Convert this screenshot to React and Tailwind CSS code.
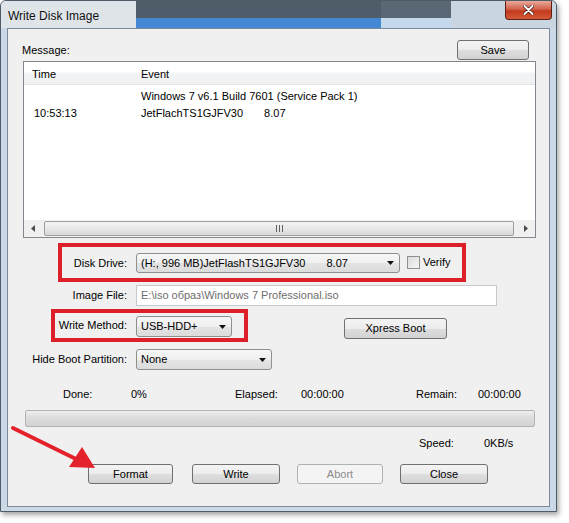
import React from "react";

const Arrow = ({ dir = "down" }) => {
  if (dir === "left")
    return (
      <svg width="4" height="7" viewBox="0 0 4 7">
        <path d="M4 0 L0 3.5 L4 7 Z" fill="#4d4d4d" />
      </svg>
    );
  if (dir === "right")
    return (
      <svg width="4" height="7" viewBox="0 0 4 7">
        <path d="M0 0 L4 3.5 L0 7 Z" fill="#4d4d4d" />
      </svg>
    );
  return (
    <svg width="7" height="4" viewBox="0 0 7 4">
      <path d="M0 0 H7 L3.5 4 Z" fill="#111" />
    </svg>
  );
};

function Combo({ className = "", children }) {
  return (
    <div
      className={`flex items-center rounded-[3px] border border-[#8e8f8f] bg-[linear-gradient(180deg,#f7f7f7_0%,#efefef_50%,#e4e4e4_51%,#dcdcdc_100%)] pl-[4px] ${className}`}
    >
      <div className="flex-1 whitespace-pre">{children}</div>
      <div className="mr-[5px] flex items-center">
        <Arrow />
      </div>
    </div>
  );
}

function Button({ className = "", disabled = false, children }) {
  return (
    <div
      className={`flex items-center justify-center rounded-[3px] border ${
        disabled
          ? "border-[#adb2b5] bg-[#f4f4f4] text-[#8c8c8c]"
          : "border-[#707070] bg-[linear-gradient(180deg,#f4f4f4_0%,#ececec_50%,#dedede_51%,#d2d2d2_100%)] text-black"
      } ${className}`}
    >
      {children}
    </div>
  );
}

function FieldRow({ label, className = "", children }) {
  return (
    <div className={`flex items-start ${className}`}>
      <div className="w-[120px] pr-[1px] text-right leading-[20px]">{label}</div>
      <div className="ml-[8px] flex items-start">{children}</div>
    </div>
  );
}

export default function App() {
  return (
    <div className="h-[523px] w-[569px] bg-white font-['Liberation_Sans',Arial,sans-serif] text-[11px] text-black">
      <div className="relative flex h-[512px] w-[557px] flex-col rounded-t-[6px] border border-[#4f5b66] bg-[#cbd9e7] shadow-[2px_3px_5px_rgba(0,0,0,0.35)]">
        {/* title bar: glass tint in three zones */}
        <div className="flex h-[27px] items-stretch overflow-hidden rounded-t-[5px]">
          <div className="flex w-[135px] items-start bg-[#dfe4e9] pl-[7px] pt-[6px] text-[12px] text-[#111]">
            Write Disk Image
          </div>
          <div className="flex w-[245px] flex-col bg-[#4f5c69]">
            <div className="flex-1" />
            <div className="h-[10px] bg-[#4488d4]" />
          </div>
          <div className="flex w-[70px] flex-col bg-[#5a6774]">
            <div className="flex-1" />
            <div className="h-[10px] bg-[#c4d9ec]" />
          </div>
          <div className="flex flex-1 items-start bg-[#c9d6e2]">
            <div className="ml-auto mr-[4px] flex h-[19px] w-[47px] items-center justify-center rounded-b-[4px] border border-t-0 border-[#5e2015] bg-[linear-gradient(180deg,#e9a99b_0%,#d2624a_45%,#c23a1e_55%,#d55a36_100%)]">
              <svg width="11" height="10" viewBox="0 0 11 10">
                <path d="M1.5 1 L9.5 9 M9.5 1 L1.5 9" stroke="#3a1008" strokeWidth="3.2" strokeLinecap="round" />
                <path d="M1.5 1 L9.5 9 M9.5 1 L1.5 9" stroke="#ffffff" strokeWidth="2" strokeLinecap="round" />
              </svg>
            </div>
          </div>
        </div>

        {/* client area */}
        <div className="mx-[6px] mb-[4px] flex-1 border border-[#7b8a9b] bg-[#f0f0f0]">
          <div className="mt-[11px] flex items-center">
            <div className="pl-[14px]">Message:</div>
            <Button className="ml-auto mr-[20px] h-[20px] w-[72px]">Save</Button>
          </div>

          {/* log list */}
          <div className="ml-[15px] mt-[1px] flex h-[177px] w-[513px] flex-col border border-[#828790] bg-white">
            <div className="flex h-[23px] items-center border-b border-[#e2e3e5] bg-[linear-gradient(180deg,#ffffff_0%,#ffffff_45%,#f3f4f5_50%,#eff0f1_100%)] pt-[3px]">
              <div className="w-[117px] pl-[8px]">Time</div>
              <div>Event</div>
            </div>
            <div className="mt-[3px] flex h-[17px] items-center">
              <div className="w-[117px]" />
              <div>Windows 7 v6.1 Build 7601 (Service Pack 1)</div>
            </div>
            <div className="flex h-[17px] items-center">
              <div className="w-[117px] pl-[10px]">10:53:13</div>
              <div>JetFlachTS1GJFV30</div>
              <div className="ml-[21px]">8.07</div>
            </div>
            <div className="flex-1" />
            <div className="flex h-[17px] items-center bg-[#f0f0f0]">
              <div className="flex w-[18px] justify-center">
                <Arrow dir="left" />
              </div>
              <div className="ml-[2px] flex h-[15px] w-[470px] items-center justify-center gap-[2px] rounded-[2px] border border-[#a0a0a0] bg-[linear-gradient(180deg,#f4f4f4_0%,#e8e8e8_50%,#d8d8d8_100%)]">
                <div className="h-[7px] w-[1px] bg-[#606060]" />
                <div className="h-[7px] w-[1px] bg-[#606060]" />
                <div className="h-[7px] w-[1px] bg-[#606060]" />
              </div>
              <div className="ml-auto flex w-[18px] justify-center">
                <Arrow dir="right" />
              </div>
            </div>
          </div>

          <FieldRow label="Disk Drive:" className="mt-[15px]">
            <Combo className="h-[20px] w-[264px]">
              (H:, 996 MB)JetFlashTS1GJFV30<span className="ml-[21px]">8.07</span>
            </Combo>
            <div className="ml-[7px] mt-[3px] h-[13px] w-[13px] border border-[#8e8f8f] bg-[linear-gradient(135deg,#dadada_0%,#f6f6f6_100%)]" />
            <div className="ml-[3px] leading-[18px]">Verify</div>
          </FieldRow>

          <FieldRow label="Image File:" className="mt-[12px]">
            <div className="flex h-[21px] w-[361px] items-center border border-[#c5c8cc] bg-white pl-[4px] text-[#6d6d6d]">
              E:\iso образ\Windows 7 Professional.iso
            </div>
          </FieldRow>

          <FieldRow label="Write Method:" className="mt-[9px]">
            <Combo className="mt-[1px] h-[21px] w-[96px]">USB-HDD+</Combo>
            <Button className="ml-[112px] mt-[3px] h-[21px] w-[103px]">Xpress Boot</Button>
          </FieldRow>

          <FieldRow label="Hide Boot Partition:" className="mt-[10px]">
            <Combo className="h-[21px] w-[136px]">None</Combo>
          </FieldRow>

          {/* progress info */}
          <div className="mt-[17px] flex h-[14px] items-center pl-[55px]">
            <div className="w-[68px]">Done:</div>
            <div className="w-[104px]">0%</div>
            <div className="w-[66px]">Elapsed:</div>
            <div className="w-[115px]">00:00:00</div>
            <div className="w-[62px]">Remain:</div>
            <div>00:00:00</div>
          </div>
          <div className="ml-[17px] mt-[9px] h-[17px] w-[510px] rounded-[2px] border border-[#b2b2b2] bg-[linear-gradient(180deg,#eeeeee_0%,#dcdcdc_45%,#d3d3d3_100%)]" />
          <div className="mt-[9px] flex h-[14px] items-center pl-[411px]">
            <div className="w-[65px]">Speed:</div>
            <div>0KB/s</div>
          </div>

          <div className="mt-[14px] flex">
            <Button className="ml-[80px] h-[20px] w-[85px]">Format</Button>
            <Button className="ml-[19px] h-[20px] w-[88px]">Write</Button>
            <Button disabled className="ml-[17px] h-[20px] w-[86px]">
              Abort
            </Button>
            <Button className="ml-[17px] h-[20px] w-[88px]">Close</Button>
          </div>
        </div>

        {/* red annotation marks */}
        <div className="absolute left-[57px] top-[242px] h-[39px] w-[408px] border-[4px] border-[#dd1f2a]" />
        <div className="absolute left-[50px] top-[308px] h-[33px] w-[197px] border-[4px] border-[#dd1f2a]" />
        <svg className="absolute left-[-1px] top-[419px]" width="100" height="60" viewBox="0 0 100 60">
          <path d="M13 8 L80 41" stroke="#e3222b" strokeWidth="4" strokeLinecap="round" />
          <path d="M95 48 L69 47 L82 27 Z" fill="#e3222b" />
        </svg>
      </div>
    </div>
  );
}
